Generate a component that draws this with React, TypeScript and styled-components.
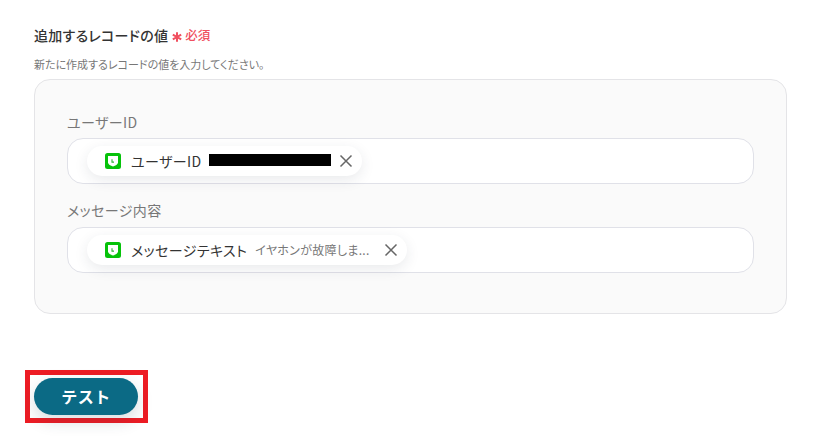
import React from 'react';
import styled, { createGlobalStyle } from 'styled-components';

const GlobalStyle = createGlobalStyle`
  html, body {
    margin: 0;
    padding: 0;
    background: #fff;
    font-family: "Noto Sans CJK JP", "Noto Sans", sans-serif;
    font-feature-settings: "palt";
  }
`;

const Page = styled.div`
  width: 820px;
  height: 440px;
  overflow: hidden;
  box-sizing: border-box;
  padding: 25px 33px 0 34px;
`;

const TitleRow = styled.div`
  display: flex;
  align-items: center;
  height: 20px;
  color: #333;
  font-size: 14px;
  font-weight: 500;
  letter-spacing: 0.3px;
  line-height: 20px;
`;

const Required = styled.span`
  display: flex;
  align-items: center;
  margin-left: 4px;
  color: #f0505f;
  font-size: 12.5px;
  font-weight: 500;
  letter-spacing: 0;
  svg {
    margin: 3px 3px 0 0;
  }
`;

const Hint = styled.p`
  margin: 12px 0 0;
  color: #777;
  font-size: 11px;
  line-height: 14px;
`;

const Panel = styled.section`
  box-sizing: border-box;
  height: 235px;
  margin-top: 8px;
  padding: 32px 32px 0;
  background: #fafafa;
  border: 1px solid #e4e4e7;
  border-radius: 16px;
`;

const FieldLabel = styled.div<{ $gap: number }>`
  color: #777;
  font-size: 14px;
  letter-spacing: 0.4px;
  line-height: 20px;
  margin-bottom: ${(p) => p.$gap}px;
`;

const Field = styled.div`
  box-sizing: border-box;
  display: flex;
  align-items: center;
  height: 46px;
  margin-bottom: 16px;
  padding-left: 19px;
  background: #fff;
  border: 1px solid #e0e1e8;
  border-radius: 16px;
`;

const Chip = styled.div`
  display: flex;
  align-items: center;
  height: 30px;
  padding: 0 9px 0 18px;
  background: #fff;
  border-radius: 15px;
  box-shadow: 0 4px 14px rgba(40, 50, 70, 0.1);
`;

const ChipName = styled.span`
  margin: -1px 0 0 10px;
  color: #333;
  font-size: 14px;
  letter-spacing: 0.4px;
  line-height: 20px;
  white-space: nowrap;
`;

const ChipValue = styled.span`
  margin: -1px 0 0 8px;
  width: 116px;
  color: #777;
  font-size: 12px;
  letter-spacing: 0.3px;
  line-height: 16px;
  white-space: nowrap;
`;

const Redacted = styled.span`
  display: block;
  margin-left: 7px;
  width: 122px;
  height: 12px;
  margin-top: -3px;
  background: #000;
`;

const Remove = styled.span<{ $gap: number }>`
  display: flex;
  margin-left: ${(p) => p.$gap}px;
`;

const Highlight = styled.div`
  display: inline-block;
  box-sizing: border-box;
  width: 123px;
  height: 53px;
  margin: 56px 0 0 -9px;
  padding: 3px 4px;
  border: 5px solid #ed1c24;
`;

const TestButton = styled.button`
  display: block;
  width: 104px;
  height: 37px;
  padding: 0 0 2px;
  border: none;
  border-radius: 19px;
  background: #0b6a85;
  box-shadow: 0 6px 16px rgba(40, 60, 80, 0.18);
  color: #fff;
  font-family: inherit;
  font-size: 16px;
  font-weight: 700;
  letter-spacing: 0.5px;
`;

const LineIcon = () => (
  <svg width="16" height="16" viewBox="0 0 16 16">
    <rect width="16" height="16" rx="2.5" fill="#06c20a" />
    <path d="M3 3h10v6.6c0 2-2.6 3.2-5 4-2.4-.8-5-2-5-4z" fill="#fff" />
    <path d="M7 6.2v2.9h2" fill="none" stroke="#2fb53a" strokeWidth="1.1" />
  </svg>
);

const CloseIcon = () => (
  <svg width="14" height="14" viewBox="0 0 14 14">
    <path d="M1.5 1.5l11 11M12.5 1.5l-11 11" stroke="#666" strokeWidth="1.5" fill="none" />
  </svg>
);

const App = () => {
  return (
    <Page>
      <GlobalStyle />
      <TitleRow>
        追加するレコードの値
        <Required>
          <svg width="10" height="10" viewBox="0 0 10 10">
            <path
              d="M5 .2v9.6M.8 2.6l8.4 4.8M9.2 2.6l-8.4 4.8"
              stroke="#f0505f"
              strokeWidth="2"
              fill="none"
            />
          </svg>
          必須
        </Required>
      </TitleRow>
      <Hint>新たに作成するレコードの値を入力してください。</Hint>
      <Panel>
        <FieldLabel $gap={6}>ユーザーID</FieldLabel>
        <Field>
          <Chip>
            <LineIcon />
            <ChipName>ユーザーID</ChipName>
            <Redacted />
            <Remove $gap={8}>
              <CloseIcon />
            </Remove>
          </Chip>
        </Field>
        <FieldLabel $gap={7}>メッセージ内容</FieldLabel>
        <Field>
          <Chip>
            <LineIcon />
            <ChipName>メッセージテキスト</ChipName>
            <ChipValue>イヤホンが故障しま...</ChipValue>
            <Remove $gap={13}>
              <CloseIcon />
            </Remove>
          </Chip>
        </Field>
      </Panel>
      <Highlight>
        <TestButton>テスト</TestButton>
      </Highlight>
    </Page>
  );
};

export default App;
